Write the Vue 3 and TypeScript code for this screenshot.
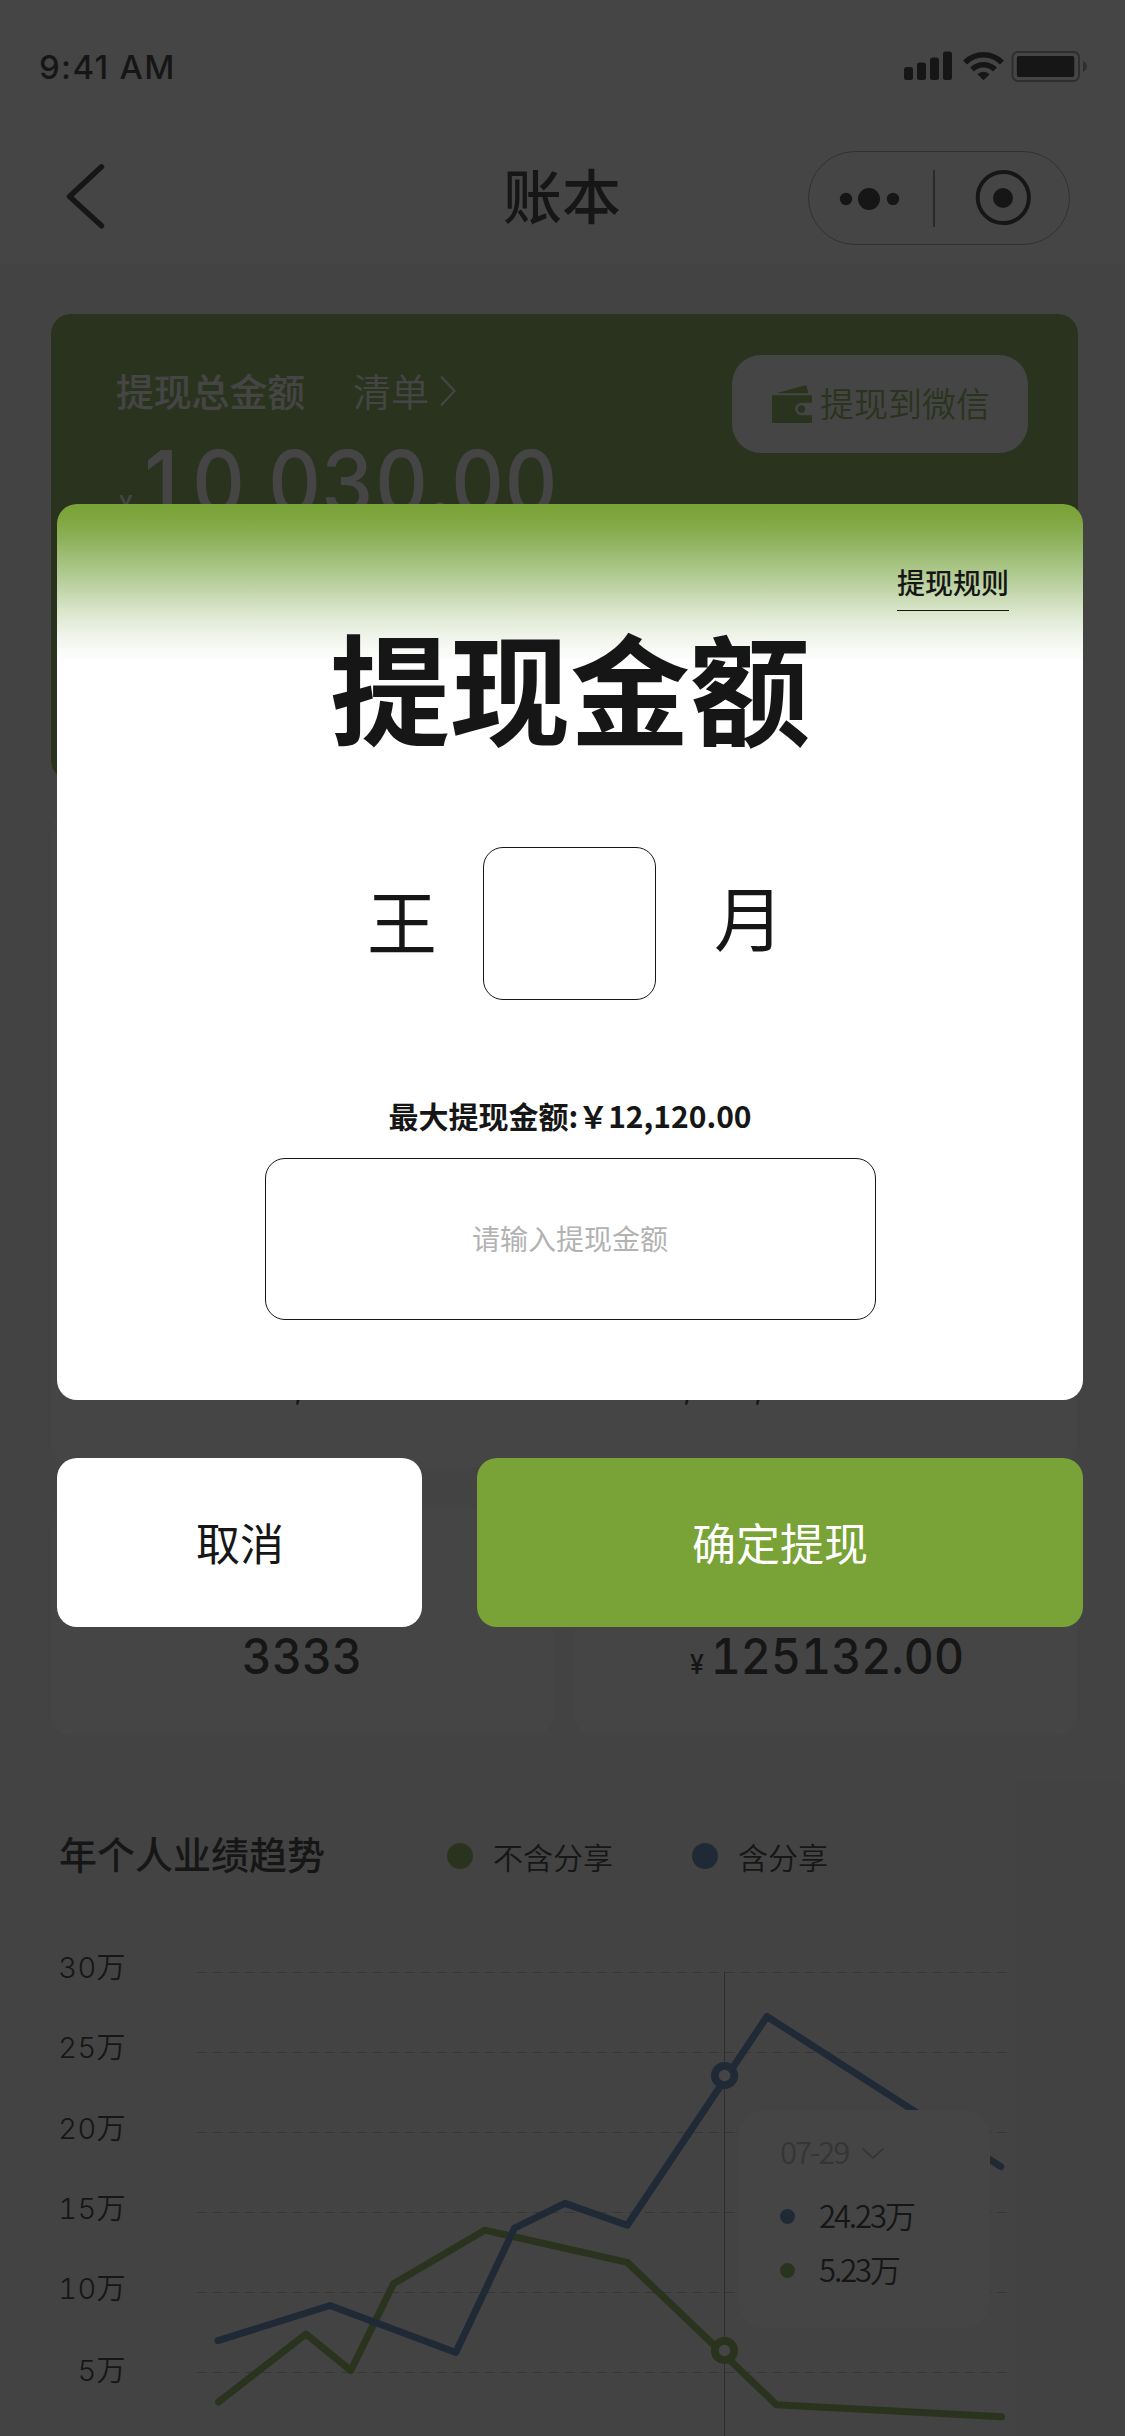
<script setup lang="ts">
interface Point {
  x: number
  y: number
}

interface Series {
  name: string
  tone: string
  points: Point[]
  marker: Point
}

interface Tick {
  label: string
  height: number
}

const pts = (raw: number[][]): Point[] => raw.map(([x, y]) => ({ x, y }))

const series: Series[] = [
  {
    name: '不含分享',
    tone: 'green',
    points: pts([[218.5, 462], [306, 394], [350.8, 430.5], [393.5, 343.8], [484.7, 290.2], [627.3, 322.4], [776.4, 464.7], [1001.5, 476.8]]),
    marker: { x: 724.5, y: 410.5 },
  },
  {
    name: '含分享',
    tone: 'blue',
    points: pts([[218, 400.7], [330, 365.5], [455.8, 412.5], [514.5, 288.1], [564.9, 263.4], [627.3, 285.2], [767, 76.5], [1000.8, 226.6]]),
    marker: { x: 724.5, y: 135.5 },
  },
]

const ticks: Tick[] = [
  { label: '30万', height: 80 },
  { label: '25万', height: 81 },
  { label: '20万', height: 80 },
  { label: '15万', height: 80 },
  { label: '10万', height: 82 },
  { label: '5万', height: 54 },
]

const gridRows = [32.5, 112.5, 192.5, 272.5, 352.5, 432.5]

const readings = [
  { tone: 'blue', value: '24.23万' },
  { tone: 'green', value: '5.23万' },
]

const toPath = (list: Point[]): string => list.map((p) => `${p.x},${p.y}`).join(' ')
</script>

<template>
  <div class="screen">
    <div class="page">
      <header class="header">
        <div class="status">
          <span class="time">9:41 AM</span>
          <svg class="status-icons" width="186" height="34" viewBox="0 0 186 34">
            <rect x="0" y="17" width="9" height="13" rx="2.5" />
            <rect x="13" y="12.5" width="9" height="17.500" rx="2.5" />
            <rect x="26" y="7.5" width="9" height="22.500" rx="2.5" />
            <rect x="39" y="1.500" width="9" height="28.500" rx="2.5" />
            <path class="wave" d="M61 12.5C71.500 2.200 87.500 2.200 98 12.500" />
            <path class="wave" d="M68 19.500C74.500 13.200 84.500 13.200 91 19.500" />
            <path d="M73.300 24.200C77 20.800 82 20.800 85.700 24.200L79.500 30.300Z" />
            <rect class="shell" x="108.500" y="2" width="66.500" height="29" rx="5.500" />
            <rect x="112.800" y="6" width="57.500" height="21" rx="2" />
            <path class="nub" d="M179 11C184 13 184 20 179 22Z" />
          </svg>
        </div>
        <div class="nav">
          <svg class="back" width="42" height="68" viewBox="0 0 42 68">
            <polyline points="37.500,3.800 5.500,33.500 37.500,62.800" />
          </svg>
          <h1 class="nav-title">账本</h1>
          <div class="capsule">
            <svg width="262" height="94" viewBox="0 0 262 94">
              <circle cx="38" cy="48" r="6.200" />
              <circle cx="61" cy="48" r="11" />
              <circle cx="85" cy="48" r="6.200" />
              <rect class="bar" x="125" y="19" width="2" height="57" />
              <circle class="ring" cx="195.300" cy="46.500" r="25.600" />
              <circle cx="195" cy="47" r="10" />
            </svg>
          </div>
        </div>
      </header>

      <main class="content">
        <section class="balance">
          <div class="balance-info">
            <div class="balance-head">
              <span class="balance-label">提现总金额</span>
              <span class="balance-list">清单</span>
              <svg width="18" height="32" viewBox="0 0 18 32">
                <polyline points="2,1.500 15.500,16 2,30.500" />
              </svg>
            </div>
            <div class="balance-value"><small>¥</small>10,030.00</div>
          </div>
          <div class="wechat">
            <svg width="40" height="38" viewBox="0 0 40 38">
              <path d="M4.500 8.300L33 0.200Q34.300 0 34.700 1.200L36.300 8.300Z" />
              <path d="M1.200 10.200H38.800Q40 10.200 40 11.400V17.700H29.500A6.300 6.300 0 0 0 29.500 30.300H40V36.800Q40 38 38.800 38H1.200Q0 38 0 36.800V11.400Q0 10.200 1.200 10.200Z" />
              <circle cx="29.500" cy="24" r="3.700" />
            </svg>
            <span>提现到微信</span>
          </div>
        </section>

        <section class="totals">
          <div class="total">¥5,000.00</div>
          <div class="total">¥1,000,000.00</div>
        </section>

        <section class="cards">
          <div class="card"><div class="card-value">3333</div></div>
          <div class="card"><div class="card-value money"><small>¥</small>125132.00</div></div>
        </section>

        <section class="trend">
          <div class="trend-head">
            <h2>年个人业绩趋势</h2>
            <div v-for="s in series" :key="s.name" class="legend" :class="s.tone">
              <i></i><span>{{ s.name }}</span>
            </div>
          </div>
          <div class="plot">
            <div class="ticks">
              <span v-for="t in ticks" :key="t.label" :style="{ height: t.height + 'px' }">{{ t.label }}</span>
            </div>
            <svg class="lines" width="1125" height="496" viewBox="0 0 1125 496">
              <line v-for="y in gridRows" :key="y" class="grid" x1="197" :y1="y" x2="1007" :y2="y" />
              <line class="cursor" x1="724.500" y1="32" x2="724.500" y2="496" />
              <g v-for="s in series" :key="s.name" :class="s.tone">
                <polyline :points="toPath(s.points)" />
                <circle :cx="s.marker.x" :cy="s.marker.y" r="9.700" />
              </g>
            </svg>
            <div class="tip">
              <div class="tip-date">
                <span>07-29</span>
                <svg width="24" height="13" viewBox="0 0 24 13">
                  <polyline points="1.500,1.500 12,11 22.500,1.500" />
                </svg>
              </div>
              <div v-for="r in readings" :key="r.tone" class="tip-row" :class="r.tone">
                <i></i><span>{{ r.value }}</span>
              </div>
            </div>
          </div>
        </section>
      </main>
    </div>

    <div class="overlay">
      <div class="dialog">
        <div class="rules"><span>提现规则</span></div>
        <div class="dialog-title">提现金额</div>
        <div class="name-row">
          <span class="name-first">王</span>
          <div class="name-box"></div>
          <span class="name-last">月</span>
        </div>
        <div class="max">最大提现金额:￥12,120.00</div>
        <div class="amount">请输入提现金额</div>
      </div>
      <div class="actions">
        <div class="btn cancel">取消</div>
        <div class="btn confirm">确定提现</div>
      </div>
    </div>
  </div>
</template>

<style>
body {
  margin: 0;
}
</style>

<style scoped>
.screen {
  position: relative;
  width: 1125px;
  height: 2436px;
  overflow: hidden;
  color: #161616;
  font-family: "Noto Sans CJK SC", sans-serif;
}

.screen * {
  box-sizing: border-box;
}

.page {
  height: 2436px;
  background: #f2f2f2;
  overflow: hidden;
}

.header {
  height: 264px;
  background: #fff;
}

.status {
  display: flex;
  justify-content: space-between;
  height: 151px;
  padding: 50px 35px 0 39px;
}

.time {
  font: 500 33px/34px Inter, sans-serif;
  letter-spacing: 1.300px;
}

.status-icons .wave {
  fill: none;
  stroke: #161616;
  stroke-width: 5.500;
}

.status-icons .shell {
  fill: none;
  stroke: #8a8a8a;
  stroke-width: 2;
}

.status-icons .nub {
  fill: #8a8a8a;
}

.status-icons {
  fill: #161616;
}

.nav {
  display: grid;
  grid-template-columns: 1fr auto 1fr;
  padding: 0 55px;
}

.back {
  margin: 12px 0 0 9px;
  fill: none;
  stroke: #161616;
  stroke-width: 5.500;
  stroke-linecap: round;
  stroke-linejoin: round;
}

.nav-title {
  margin: 0 1px 0 0;
  font-size: 59px;
  font-weight: 500;
  line-height: 86px;
}

.capsule {
  justify-self: end;
  width: 262px;
  height: 94px;
  border: 1px solid #949494;
  border-radius: 47px;
}

.capsule svg {
  display: block;
  margin: -1px;
  fill: #161616;
}

.capsule .bar {
  fill: #7a7a7a;
}

.capsule .ring {
  fill: none;
  stroke: #161616;
  stroke-width: 4;
}

.content {
  padding: 50px 48px 0 51px;
}

.balance {
  display: flex;
  justify-content: space-between;
  width: 1027px;
  height: 466px;
  padding: 41px 50px 0 65px;
  border-radius: 20px;
  background: #7aa337;
  color: #fff;
}

.balance-head {
  display: flex;
  align-items: center;
  margin-top: 8px;
  height: 56px;
  font-size: 38px;
  line-height: 54px;
}

.balance-head span {
  margin-top: -2px;
}

.balance-label {
  font-weight: 500;
  letter-spacing: -0.2px;
}

.balance-head .balance-list {
  margin: -2px 10px 0 48px;
  font-weight: 350;
}

.balance-head svg {
  fill: none;
  stroke: #fff;
  stroke-width: 2.200;
}

.balance-value {
  margin: 10px 0 0 3px;
  font: 500 88px/106px Inter, sans-serif;
  font-feature-settings: "tnum" 1;
  white-space: nowrap;
  transform: scaleX(0.94);
  transform-origin: left;
}

.balance-value small {
  margin-right: 6px;
  font-size: 26px;
}

.wechat {
  display: flex;
  align-items: center;
  justify-content: center;
  width: 296px;
  height: 98px;
  padding-left: 2px;
  border-radius: 29px;
  background: #fff;
  color: #7aa337;
  font-size: 34px;
  font-weight: 350;
  line-height: 48px;
}

.wechat span {
  margin-top: -2px;
}

.wechat svg {
  margin-right: 8px;
  fill: #7aa337;
}

.totals {
  display: flex;
  width: 1026px;
  height: 655px;
  margin-top: 32px;
  padding: 557px 0 0 205px;
  border-radius: 20px;
  background: #fff;
  font: 400 32px/38px Inter, sans-serif;
  font-feature-settings: "tnum" 1;
}

.total {
  width: 389px;
}

.cards {
  display: flex;
  gap: 22px;
  width: 1026px;
  margin-top: 42px;
}

.card {
  flex: 1;
  height: 226px;
  padding-top: 119px;
  border-radius: 20px;
  background: #fff;
}

.card-value {
  font: 500 49px/58px Inter, sans-serif;
  font-feature-settings: "tnum" 1;
  text-align: center;
  transform: scaleX(0.948);
}

.card .money {
  padding-left: 2px;
}

.card small {
  margin-right: 7px;
  font-size: 27px;
}

.trend-head {
  display: flex;
  align-items: center;
  height: 56px;
  margin: 90px 0 0 8px;
}

h2 {
  width: 388px;
  margin: 0;
  font-size: 38px;
  font-weight: 500;
  line-height: 56px;
}

.legend {
  display: flex;
  align-items: center;
  width: 245px;
  padding-top: 5px;
  font-size: 30px;
  font-weight: 350;
}

.legend i {
  width: 26px;
  height: 26px;
  margin-right: 20px;
  border-radius: 50%;
}

.green i {
  background: #7aa337;
}

.blue i {
  background: #437ab6;
}

.plot {
  position: relative;
  height: 496px;
  margin: 59px 0 0 -51px;
}

.lines {
  display: block;
  position: absolute;
  left: 0;
  top: 0;
}

.lines .grid {
  stroke: #b4b4b4;
  stroke-dasharray: 10 6;
}

.lines .cursor {
  stroke: #8c8c8c;
}

.lines polyline {
  fill: none;
  stroke-width: 7;
  stroke-linecap: round;
  stroke-linejoin: round;
}

.lines circle {
  fill: #fff;
  stroke-width: 7.800;
}

.lines .green {
  stroke: #7aa337;
}

.lines .blue {
  stroke: #437ab6;
}

.ticks {
  display: flex;
  flex-direction: column;
  width: 126px;
  padding-top: 6px;
  font: 350 29px/44px Inter, "Noto Sans CJK SC", sans-serif;
  font-feature-settings: "tnum" 1;
  letter-spacing: 0.4px;
  text-align: right;
}

.tip {
  position: absolute;
  left: 738px;
  top: 170px;
  width: 252px;
  height: 218px;
  padding: 18px 0 0 42px;
  border-radius: 28px;
  background: #fff;
  font-size: 31px;
  font-weight: 350;
  line-height: 46px;
  letter-spacing: -2.100px;
}

.tip-date {
  display: flex;
  align-items: center;
  height: 46px;
  margin-bottom: 15px;
  color: #b0b0b0;
}

.tip-date svg {
  margin: 4px 0 0 13px;
  fill: none;
  stroke: #b0b0b0;
  stroke-width: 2;
}

.tip-row {
  display: flex;
  align-items: center;
  height: 54px;
}

.tip-row i {
  width: 15px;
  height: 15px;
  margin-right: 24px;
  border-radius: 50%;
}

.tip-row span {
  margin-top: -2px;
}

.overlay {
  position: absolute;
  inset: 0;
  padding: 504px 42px 0 57px;
  background: rgba(22, 22, 22, 0.8);
}

.dialog {
  display: flex;
  flex-direction: column;
  align-items: center;
  height: 896px;
  border-radius: 20px;
  background: linear-gradient(#79a237 0, #7fa740 15px, #8db15a 35px, #b9d09e 79px, #d8e5c9 106px, #eff4ea 131px, #fff 158px);
}

.rules {
  align-self: flex-end;
  height: 107px;
  margin-right: 74px;
  padding-top: 57px;
  border-bottom: 1px solid #161616;
  font-size: 28px;
  font-weight: 500;
  line-height: 42px;
}

.dialog-title {
  height: 173px;
  font-size: 120px;
  font-weight: 700;
  line-height: 148px;
}

.name-row {
  display: flex;
  align-items: flex-start;
  height: 153px;
  margin: 63px 0 0 11px;
  font-size: 70px;
  line-height: 100px;
}

.name-box {
  width: 173px;
  height: 153px;
  margin: 0 58px 0 46px;
  border: 1px solid #161616;
  border-radius: 20px;
}

.name-first {
  margin-top: 23px;
}

.name-last {
  margin-top: 19px;
}

.max {
  margin-top: 93px;
  font-size: 30px;
  font-weight: 700;
  line-height: 44px;
}

.amount {
  display: flex;
  align-items: center;
  justify-content: center;
  width: 611px;
  height: 162px;
  margin-top: 21px;
  padding-bottom: 3px;
  border: 1px solid #161616;
  border-radius: 20px;
  color: #b2b2b2;
  font-size: 28px;
}

.actions {
  display: flex;
  justify-content: space-between;
  margin-top: 58px;
}

.btn {
  height: 169px;
  border-radius: 20px;
  font-size: 44px;
  line-height: 168px;
  text-align: center;
}

.cancel {
  width: 365px;
  padding-left: 1px;
  background: #fff;
}

.confirm {
  width: 606px;
  background: #79a237;
  color: #fff;
}
</style>
